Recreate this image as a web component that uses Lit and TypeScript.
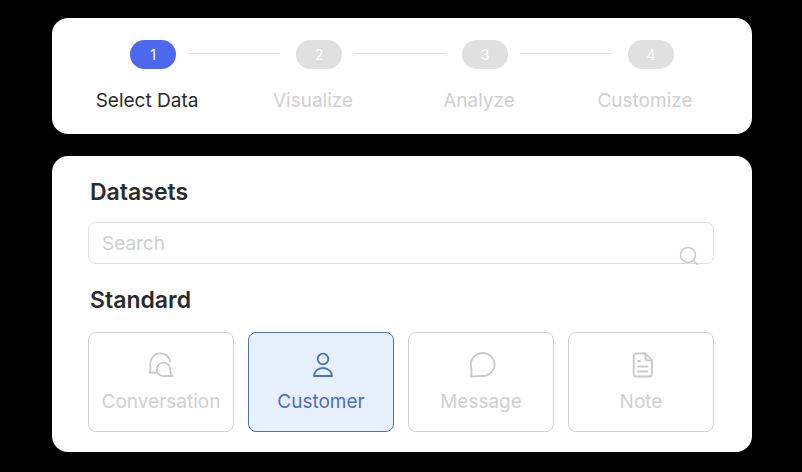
import { LitElement, html, css, svg } from "lit";
import { customElement } from "lit/decorators.js";

const steps = ["Select Data", "Visualize", "Analyze", "Customize"];
const icons: Record<string, unknown> = {
  Conversation: svg`<path d="M8.500 21.500H1.500C2.600 20 2.800 18.500 2.400 16 1.200 7.500 6.500 2.300 12.200 2.300c5.300 0 9.500 3.800 10 8.400"/><path d="M15.500 25H24.500C22.700 23.500 22.200 21.500 22.200 18A6.700 6.700 0 1 0 15.500 25Z"/>`,
  Customer: svg`<circle cx="15" cy="8" r="5.300"/><path d="M6 25c0-4.500 4-8 9-8s9 3.500 9 8Z"/>`,
  Message: svg`<path d="M14.700 25C11 25 8 25.500 3 25.500 4 23.500 3.500 19 2.900 13.500A11.800 11.500 0 1 1 14.700 25Z"/>`,
  Note: svg`<path d="M8.200 2.500H17.500L24 9.300V23A2.500 2.500 0 0 1 21.500 25.500H8.200A2.500 2.500 0 0 1 5.700 23V5A2.500 2.500 0 0 1 8.200 2.500Z"/><path d="M17.500 2.500V7.300A2 2 0 0 0 19.500 9.300H24"/><path d="M10 10h2M10 15.500h9.300M10 20.500h9.300"/>`,
};

@customElement("app-root")
export class AppRoot extends LitElement {
  static styles = css`
    :host { display: block; width: 802px; height: 472px; background: #000; font-family: Inter, "Liberation Sans", sans-serif; overflow: hidden; }
    .page { display: flex; flex-direction: column; gap: 22px; padding: 18px 50px 20px 52px; }
    .card { background: #fff; border-radius: 16px; }
    .stepper { height: 116px; box-sizing: border-box; padding: 22px 0 0 78px; }
    .track { display: flex; align-items: flex-start; gap: 12px; }
    .pill { width: 46px; height: 29px; border-radius: 15px; background: #e0e0e0; color: #fff; font-size: 14px; display: flex; align-items: center; justify-content: center; flex: none; }
    .pill.on { background: #4c68ee; }
    .line { width: 92px; height: 1px; margin: 13px 4px 0 0; background: #e2e2e2; }
    .labels { display: grid; grid-template-columns: repeat(4, 166px); margin: 20px 0 0 -66px; }
    .label { text-align: center; font-size: 19px; line-height: 24px; color: #d0d0d0; }
    .label.on { color: #2b2b2b; }
    .data { height: 296px; box-sizing: border-box; padding: 22px 38px 0 36px; }
    h2 { margin: 0 0 0 2px; font-size: 23px; line-height: 28px; font-weight: 600; color: #2b2b2b; }
    .search { position: relative; height: 42px; box-sizing: border-box; margin: 16px 0 22px; border: 1.500px solid #e0e0e0; border-radius: 8px; padding-left: 13px; display: flex; align-items: center; font-size: 19px; color: #cfcfcf; }
    .search svg { position: absolute; right: 14px; bottom: -3px; width: 20px; height: 20px; fill: none; stroke: #c9c9c9; stroke-width: 1.500; }
    .grid { display: grid; grid-template-columns: repeat(4, 146px); gap: 14px; margin-top: 18px; }
    .tile { height: 100px; box-sizing: border-box; border: 1px solid #d2d2d2; border-radius: 8px; display: flex; flex-direction: column; align-items: center; padding-top: 18px; gap: 12px; font-size: 19px; line-height: 26px; color: #d0d0d0; }
    .tile svg { width: 26px; height: 26px; flex: none; overflow: visible; fill: none; stroke: #c9c9c9; stroke-width: 1.800; stroke-linejoin: round; stroke-linecap: round; }
    .tile.on { background: #e7f1fd; border-color: #5070b8; color: #4f6cc4; }
    .tile.on svg { stroke: #4f6cc4; }
  `;

  render() {
    return html`<div class="page">
      <section class="card stepper">
        <div class="track">
          ${steps.map((_, i) => html`
            ${i ? html`<div class="line"></div>` : ""}
            <div class="pill ${i === 0 ? "on" : ""}">${i + 1}</div>`)}
        </div>
        <div class="labels">
          ${steps.map((s, i) => html`<div class="label ${i === 0 ? "on" : ""}">${s}</div>`)}
        </div>
      </section>
      <section class="card data">
        <h2>Datasets</h2>
        <div class="search">Search
          <svg viewBox="0 0 20 20"><circle cx="9" cy="9" r="7.500"/><path d="M14.500 14.500L19 19"/></svg>
        </div>
        <h2>Standard</h2>
        <div class="grid">
          ${Object.keys(icons).map((k) => html`<div class="tile ${k === "Customer" ? "on" : ""}">
            <svg viewBox="0 0 26 26">${icons[k]}</svg>${k}</div>`)}
        </div>
      </section>
    </div>`;
  }
}
